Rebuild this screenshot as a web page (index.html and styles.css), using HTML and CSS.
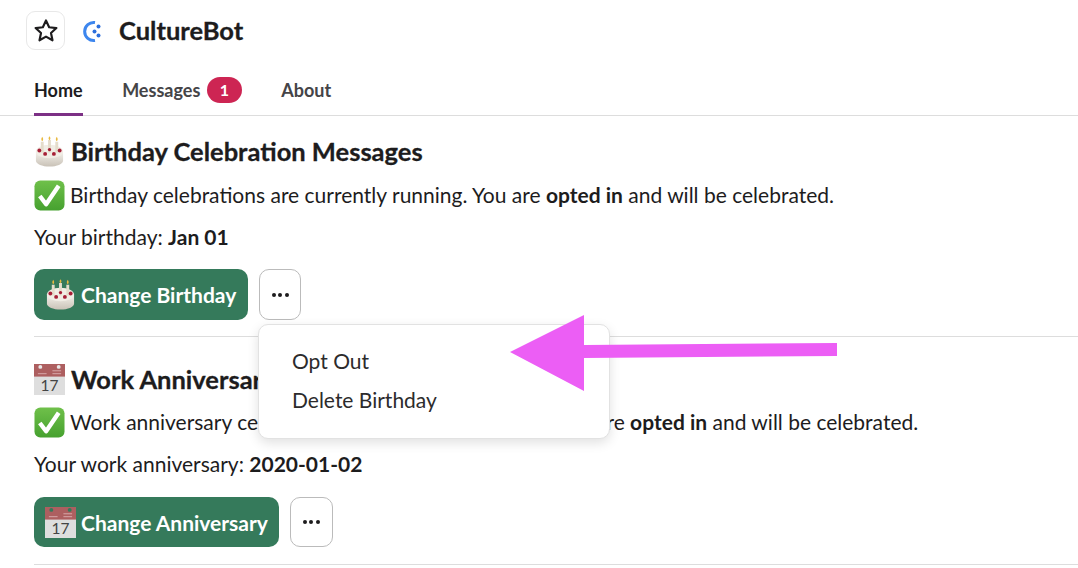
FILE: index.html
```html
<!DOCTYPE html>
<html lang="en">
<head>
  <meta charset="UTF-8" />
  <title>CultureBot</title>
  <link rel="stylesheet" href="styles.css">
</head>
<body>
  <svg class="defs" width="0" height="0">
    <defs>
      <linearGradient id="green" x1="0" y1="0" x2="0" y2="1">
        <stop offset="0" stop-color="#6fc04a"/>
        <stop offset="1" stop-color="#46a12f"/>
      </linearGradient>
      <linearGradient id="frosting" x1="0" y1="0" x2="0" y2="1">
        <stop offset="0" stop-color="#f5f2ec"/>
        <stop offset="1" stop-color="#c9c2b7"/>
      </linearGradient>
    </defs>
    <symbol id="cake" viewBox="0 0 32 32">
      <path d="M2 16v9.500C2 29 8.500 31.500 16 31.500S30 29 30 25.500V16z" fill="url(#frosting)"/>
      <ellipse cx="16" cy="16" rx="14" ry="7" fill="#f1ede5"/>
      <path d="M7 6h3v11H7zM14.500 4h3v13h-3zM22 6h3v11h-3z" fill="#e4dccb"/>
      <path d="M8.500 .8c1.100 1.700 1.500 3 0 4.700-1.500-1.700-1.100-3 0-4.700zM16 .2c1.100 1.500 1.500 2.700 0 4.300-1.500-1.600-1.100-2.800 0-4.300zM23.500 .8c1.100 1.700 1.500 3 0 4.700-1.500-1.700-1.100-3 0-4.700z" fill="#e9b93f"/>
      <g fill="#a61f36">
        <circle cx="5.500" cy="15" r="2"/><circle cx="11.500" cy="18.500" r="2"/><circle cx="16" cy="14" r="1.700"/>
        <circle cx="20.500" cy="18.500" r="2"/><circle cx="26.500" cy="15" r="2"/>
      </g>
    </symbol>
    <symbol id="check" viewBox="0 0 32 32">
      <rect x="0.500" y="0.500" width="31" height="31" rx="6" fill="url(#green)"/>
      <path d="M6 16.500l6.500 8.500L25.500 6" fill="none" stroke="#fff" stroke-width="4.500" stroke-linejoin="round"/>
    </symbol>
  </svg>

  <header class="top">
    <button class="star-btn">
      <svg width="26" height="26" viewBox="0 0 24 24"><path d="M12 2.300l2.900 6.200 6.700.8-5 4.600 1.400 6.700-6-3.400-6 3.400 1.400-6.700-5-4.600 6.700-.8z" fill="none" stroke="#1d1c1d" stroke-width="2" stroke-linejoin="round"/></svg>
    </button>
    <div class="logo">
      <svg width="24" height="24" viewBox="0 0 24 24">
        <path d="M15 3.600A9 9 0 1 0 15 21.400" fill="none" stroke="#3d86ee" stroke-width="3"/>
        <circle cx="14.500" cy="12.500" r="2" fill="#2c6fdc"/>
        <circle cx="18.500" cy="7.500" r="2" fill="#2c6fdc"/>
        <circle cx="18.500" cy="16.500" r="2" fill="#2c6fdc"/>
      </svg>
    </div>
    <div class="app-name">CultureBot</div>
  </header>

  <nav class="tabs">
    <a class="tab active">Home</a>
    <a class="tab">Messages <span class="badge">1</span></a>
    <a class="tab">About</a>
  </nav>

  <div class="section first">
    <h2><svg class="emoji"><use href="#cake"/></svg>Birthday Celebration Messages</h2>
    <p class="status"><svg class="emoji"><use href="#check"/></svg>Birthday celebrations are currently running. You are <b>opted in</b> and will be celebrated.</p>
    <p class="date">Your birthday: <b>Jan 01</b></p>
    <div class="actions">
      <button class="primary"><svg class="emoji"><use href="#cake"/></svg>Change Birthday</button>
      <button class="more"><span></span><span></span><span></span></button>
    </div>
  </div>

  <div class="section">
    <h2>
      <svg class="emoji" viewBox="0 0 32 32">
        <rect width="32" height="32" fill="#dedede"/>
        <rect width="32" height="13" fill="#ad5f60"/>
        <circle cx="6.500" cy="3" r="2" fill="#e8e8e8"/>
        <circle cx="25.500" cy="3" r="2" fill="#e8e8e8"/>
        <path d="M4 10h9M19 10h9M19 7h9" stroke="#d9a9aa" stroke-width="1"/>
        <text x="16" y="28" text-anchor="middle" class="cal-day">17</text>
      </svg>Work Anniversary Messages</h2>
    <p class="status"><svg class="emoji"><use href="#check"/></svg>Work anniversary celebrations are currently running. You are <b>opted in</b> and will be celebrated.</p>
    <p class="date">Your work anniversary: <b>2020-01-02</b></p>
    <div class="actions">
      <button class="primary">
        <svg class="emoji" viewBox="0 0 32 32">
          <rect width="32" height="32" fill="#dedede"/>
          <rect width="32" height="13" fill="#ad5f60"/>
          <circle cx="6.500" cy="3" r="2" fill="#357a5b"/>
          <circle cx="25.500" cy="3" r="2" fill="#357a5b"/>
          <path d="M4 10h9M19 10h9M19 7h9" stroke="#d9a9aa" stroke-width="1"/>
          <text x="16" y="28" text-anchor="middle" class="cal-day">17</text>
        </svg>Change Anniversary</button>
      <button class="more"><span></span><span></span><span></span></button>
    </div>
  </div>

  <div class="menu">
    <div class="menu-item">Opt Out</div>
    <div class="menu-item">Delete Birthday</div>
  </div>

  <svg class="arrow" width="328" height="76" viewBox="0 0 328 76">
    <path d="M0 37L74 0V30L327 28V41L74 43V76z" fill="#ec5ef5"/>
  </svg>
</body>
</html>
```

FILE: styles.css
```css
body {
  font-family: Lato, "Open Sans", sans-serif;
  color: #1d1c1d;
  background: #fff;
  margin: 0;
  height: 568px;
  overflow: hidden;
  position: relative;
}

.defs {
  position: absolute;
}

.cal-day {
  font-family: Lato, sans-serif;
  font-size: 16px;
  font-weight: 400;
  fill: #444;
  -webkit-text-stroke: 0;
}

.top {
  display: flex;
  align-items: center;
  padding: 11px 0 0 26px;
  height: 39px;
}

.star-btn {
  width: 39px;
  height: 39px;
  padding: 0;
  display: flex;
  align-items: center;
  justify-content: center;
  background: #fff;
  border: 1px solid #e8e8e8;
  border-radius: 9px;
}

.logo {
  width: 33px;
  height: 33px;
  margin-left: 10px;
  display: flex;
  align-items: center;
  justify-content: center;
}

.app-name {
  margin-left: 11px;
  margin-top: -2px;
  font-size: 25.500px;
  font-weight: 700;
  -webkit-text-stroke: 0.300px #1d1c1d;
}

.tabs {
  display: flex;
  gap: 39.500px;
  height: 66px;
  padding-left: 34px;
  border-bottom: 1px solid #ddd;
  box-sizing: border-box;
}

.tab {
  display: flex;
  align-items: center;
  gap: 6.500px;
  height: 66px;
  padding-top: 13px;
  box-sizing: border-box;
  font-size: 18px;
  font-weight: 700;
  color: #454447;
}

.tab.active {
  color: #1d1c1d;
  box-shadow: inset 0 -3px 0 #7c3085;
}

.badge {
  width: 35px;
  height: 26px;
  line-height: 26px;
  border-radius: 13px;
  background: #cd2553;
  color: #fff;
  font-size: 16px;
  text-align: center;
}

.section {
  margin: 0 0 0 34px;
  height: 228px;
  border-bottom: 1px solid #ddd;
  box-sizing: border-box;
  padding-top: 26px;
}

.section.first {
  height: 221px;
  padding-top: 19px;
}

.emoji {
  width: 31px;
  height: 31px;
  flex: none;
  margin-right: 6px;
  vertical-align: middle;
}

h2 {
  display: flex;
  align-items: center;
  margin: 0;
  height: 32px;
  font-size: 25.500px;
  font-weight: 700;
  white-space: nowrap;
  -webkit-text-stroke: 0.300px #1d1c1d;
}

.status {
  margin: 11px 0 0;
  height: 32px;
  line-height: 32px;
  font-size: 21px;
  white-space: nowrap;
}

.status .emoji {
  margin-right: 5px;
  vertical-align: -8px;
}

.first .status {
  margin-top: 12px;
}

.date {
  margin: 10px 0 0;
  height: 32px;
  line-height: 32px;
  font-size: 21px;
}

.actions {
  display: flex;
  gap: 11px;
  margin-top: 17px;
  height: 50px;
}

.first .actions {
  margin-top: 16px;
  height: 51px;
}

button {
  font-family: inherit;
}

.primary {
  display: flex;
  align-items: center;
  padding: 0 11px;
  background: #357a5b;
  color: #fff;
  border: none;
  border-radius: 10px;
  font-size: 21px;
  font-weight: 700;
}

.first .primary {
  padding-right: 12px;
}

.more {
  display: flex;
  align-items: center;
  justify-content: center;
  gap: 2.500px;
  width: 43px;
  padding: 0;
  background: #fff;
  border: 1px solid #bbb;
  border-radius: 10px;
}

.first .more {
  width: 42px;
}

.primary .emoji {
  margin-right: 5px;
}

.more span {
  width: 4px;
  height: 4px;
  border-radius: 50%;
  background: #1d1c1d;
}

.menu {
  position: absolute;
  left: 258px;
  top: 324px;
  width: 352px;
  height: 115px;
  box-sizing: border-box;
  padding-top: 16px;
  background: #fff;
  border: 1px solid #e2e2e2;
  border-radius: 10px;
  box-shadow: 0 4px 12px rgba(0,0,0,0.12);
}

.menu-item {
  height: 39px;
  line-height: 39px;
  padding-left: 33px;
  font-size: 21px;
  color: #2c2b2c;
}

.arrow {
  position: absolute;
  left: 510px;
  top: 315px;
}
```
